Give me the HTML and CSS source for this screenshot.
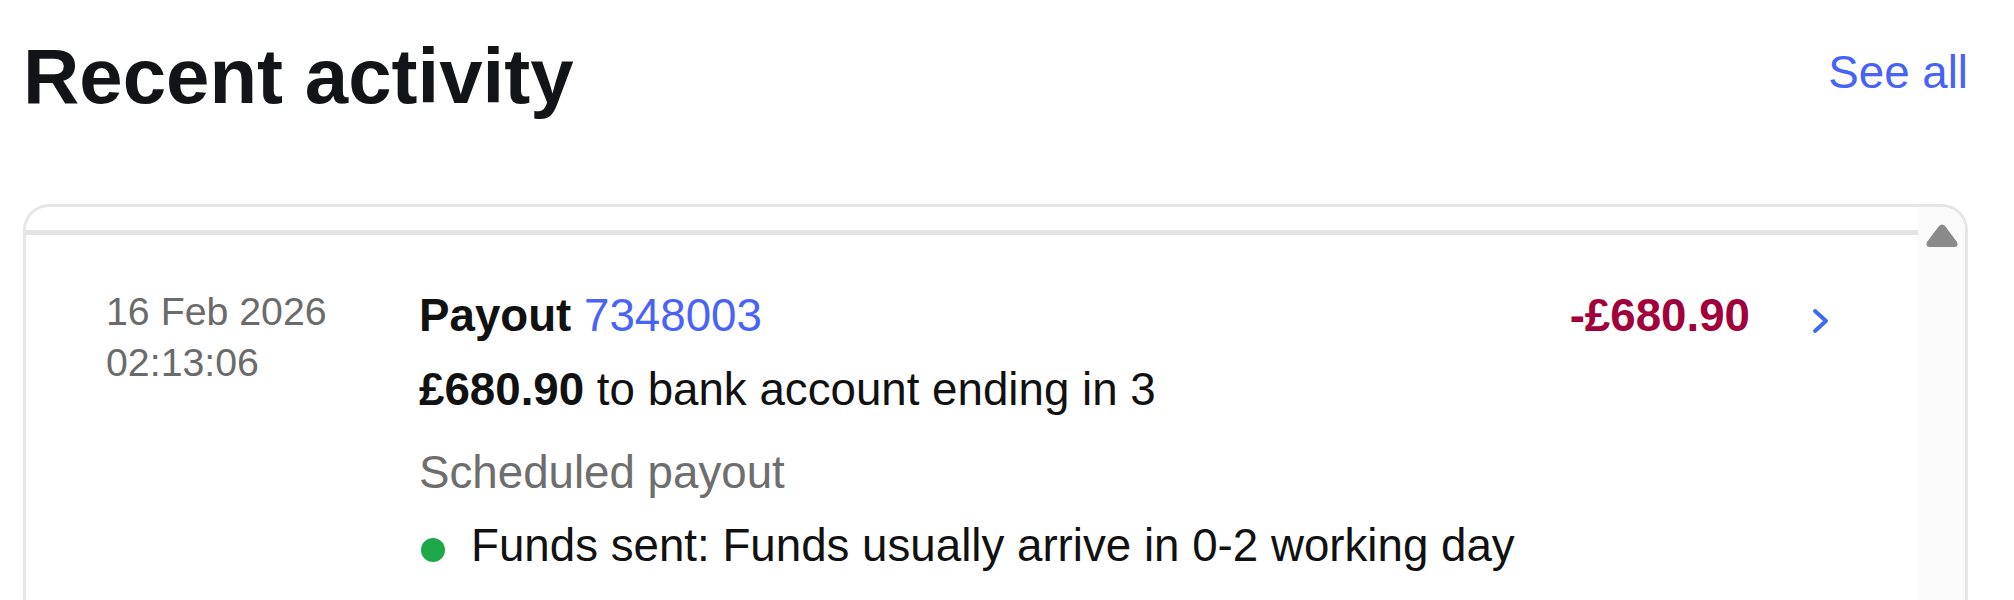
FILE: index.html
```html
<!DOCTYPE html>
<html lang="en">
  <head>
    <meta charset="utf-8">
    <title>Recent activity</title>
    <link rel="stylesheet" href="styles.css">
  </head>
  <body>

  <div class="page">

    <header class="section-head">
      <h2 class="section-title">Recent activity</h2>
      <a class="see-all" href="#">See all</a>
    </header>

    <div class="activity-card">
      <div class="activity-list">
        <div class="activity-head"></div>

        <div class="activity-row">
          <div class="activity-date">16 Feb 2026<br>02:13:06</div>

          <div class="activity-body">
            <div class="activity-title"><strong>Payout</strong> <a href="#">7348003</a></div>
            <div class="activity-desc"><strong>£680.90</strong> to bank account ending in 3</div>
            <div class="activity-type">Scheduled payout</div>
            <div class="activity-status"><span class="dot"></span>Funds sent: Funds usually arrive in 0-2 working day</div>
          </div>

          <div class="activity-amount">-£680.90</div>

          <a class="activity-go" href="#">
            <svg width="20" height="28" viewBox="0 0 20 28"><polyline points="4,4 15,14 4,24" fill="none" stroke="#3d6cf0" stroke-width="4" stroke-linecap="round" stroke-linejoin="round"/></svg>
          </a>
        </div>
      </div>

      <!-- fake scrollbar track -->
      <div class="scrollbar">
        <svg class="scroll-up" width="34" height="25" viewBox="0 0 34 25"><path d="M14 3 Q17 0 20 3 L32 19 Q34 24 29 24 L5 24 Q0 24 2 19 Z" fill="#8a8a8a"/></svg>
      </div>
    </div>

  </div>

  </body>
</html>
```

FILE: styles.css
```css
html, body {
  margin: 0;
  padding: 0;
  background: #ffffff;
  overflow: hidden;
}

body {
  font-family: "Liberation Sans", Arial, sans-serif;
  color: #111111;
}

a {
  text-decoration: none;
}

.page {
  width: 1968px;
  height: 600px;
  box-sizing: border-box;
  padding-left: 23px;
  overflow: hidden;
}

/* header */

.section-head {
  display: flex;
  justify-content: space-between;
  align-items: flex-start;
  padding-top: 31px;
}

.section-title {
  margin: 0;
  font-size: 78px;
  line-height: 90px;
  font-weight: bold;
  color: #121418;
}

.see-all {
  margin-top: 16px;
  font-size: 45.7px;
  line-height: 52px;
  color: #4662f7;
  white-space: nowrap;
}

/* card */

.activity-card {
  display: flex;
  margin-top: 83px;
  height: 480px;
  box-sizing: border-box;
  border: 3px solid #e6e6e6;
  border-bottom: none;
  border-radius: 26px 26px 0 0;
  overflow: hidden;
}

.activity-list {
  flex: 1;
}

.activity-head {
  height: 23px;
  border-bottom: 5px solid #e3e3e3;
}

.activity-row {
  display: flex;
  align-items: flex-start;
  padding: 49px 87px 0 80px;
}

.activity-date {
  width: 313px;
  flex-shrink: 0;
  margin-top: 2px;
  font-size: 39.3px;
  line-height: 51px;
  color: #6b6b6b;
}

.activity-body {
  flex: 1;
  font-size: 45.7px;
  line-height: 64px;
}

.activity-title a {
  color: #4a63f7;
}

.activity-desc {
  margin-top: 10px;
  white-space: nowrap;
}

.activity-type {
  margin-top: 19px;
  color: #6e6e6e;
}

.activity-status {
  display: flex;
  align-items: center;
  margin-top: 9px;
  white-space: nowrap;
}

.dot {
  width: 24px;
  height: 24px;
  margin: 8px 26px 0 2px;
  border-radius: 50%;
  background: #1fa84a;
  flex-shrink: 0;
}

.activity-amount {
  font-size: 45.7px;
  line-height: 64px;
  font-weight: bold;
  color: #a1003a;
}

.activity-go {
  display: block;
  margin: 23px 0 0 61px;
  height: 28px;
}

.activity-go svg {
  display: block;
}

/* scrollbar */

.scrollbar {
  width: 47px;
  flex-shrink: 0;
  background: #fafafa;
}

.scroll-up {
  display: block;
  margin: 16px auto 0;
}
```
